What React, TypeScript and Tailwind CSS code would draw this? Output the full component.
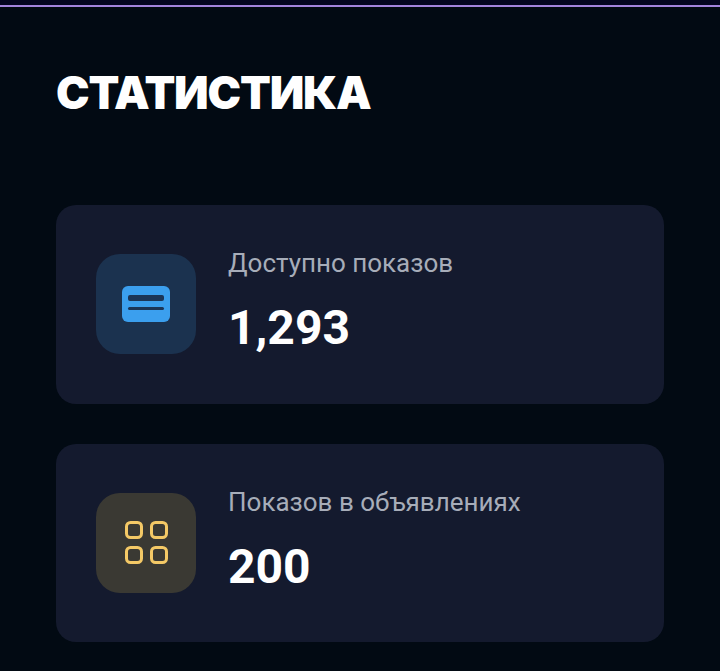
import React from "react";

function CardIcon() {
  return (
    <svg width="48" height="36" viewBox="0 0 48 36" fill="none">
      <rect width="48" height="36" rx="6" fill="#3b9fee" />
      <rect x="6" y="9" width="36" height="6" rx="2" fill="#1b3557" />
      <rect x="6" y="21" width="36" height="3" rx="1.5" fill="#1b3557" />
    </svg>
  );
}

function GridIcon() {
  return (
    <svg width="43" height="43" viewBox="0 0 43 43" fill="none" stroke="#f4c966" strokeWidth="3">
      <rect x="1.5" y="1.5" width="15" height="15" rx="4" />
      <rect x="26.5" y="1.5" width="15" height="15" rx="4" />
      <rect x="1.5" y="26.5" width="15" height="15" rx="4" />
      <rect x="26.5" y="26.5" width="15" height="15" rx="4" />
    </svg>
  );
}

function StatCard({ icon, iconBg, label, value }: { icon: React.ReactNode; iconBg: string; label: string; value: string }) {
  return (
    <div className="flex h-[198.4px] items-center gap-8 rounded-[20px] bg-[#141a2e] px-10">
      <div className={`flex h-[100px] w-[100px] shrink-0 items-center justify-center rounded-3xl ${iconBg}`}>{icon}</div>
      <div className="flex flex-col pb-[9px]">
        <div className="text-[26px] leading-[32px] text-[#a7adb9]">{label}</div>
        <div className="mt-[25px] text-[48px] leading-[48px] font-bold text-white">{value}</div>
      </div>
    </div>
  );
}

export default function App() {
  return (
    <div className="h-[671px] w-[720px] overflow-hidden bg-[#020a13] font-['Roboto',sans-serif]">
      <div className="h-[5px] bg-[#03051f]" />
      <div className="h-[2px] bg-[#a283dc]" />
      <div className="px-14">
        <h1 className="mt-[59px] font-['Inter',sans-serif] text-[45px] leading-[54px] font-black tracking-[-1.2px] text-white">СТАТИСТИКА</h1>
        <div className="mt-[85.2px] flex flex-col gap-[40.2px]">
          <StatCard icon={<CardIcon />} iconBg="bg-[#1b324f]" label="Доступно показов" value="1,293" />
          <StatCard icon={<GridIcon />} iconBg="bg-[#3a3933]" label="Показов в объявлениях" value="200" />
        </div>
      </div>
    </div>
  );
}
